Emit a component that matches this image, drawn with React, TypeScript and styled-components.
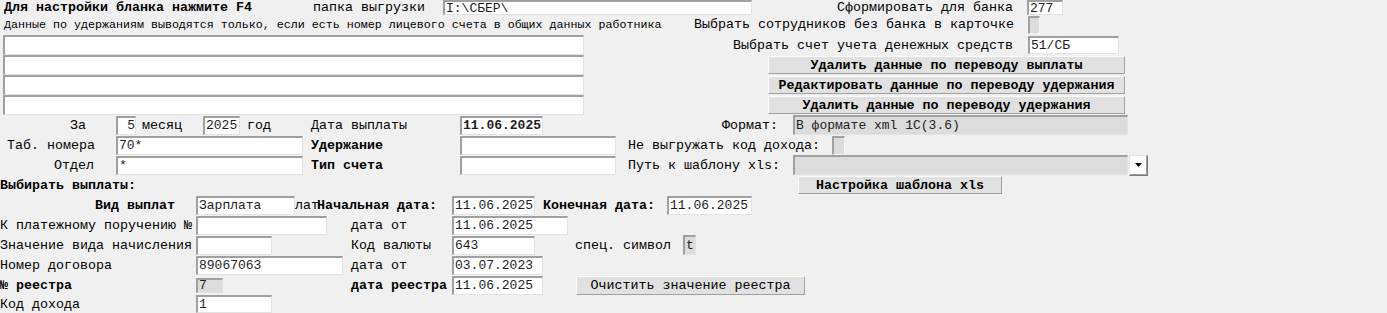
import styled, { createGlobalStyle } from 'styled-components';

const GlobalStyle = createGlobalStyle`
  body {
    margin: 0;
    background: #f0f0f0;
    font-family: "Courier New", "Nimbus Mono PS", "Nimbus Mono L", FreeMono, "Liberation Mono", monospace;
    font-size: 13.33px;
    color: #000;
  }
`;

const Form = styled.div`
  width: 1387px;
  height: 313px;
  overflow: hidden;
  display: flex;
  flex-direction: column;
`;

const Row = styled.div<{ $h: number }>`
  display: flex;
  align-items: center;
  height: ${({ $h }) => $h}px;
  flex: none;
`;

const Gap = styled.div<{ $w: number }>`
  flex: none;
  width: ${({ $w }) => $w}px;
`;

const Label = styled.div<{ $w: number; $bold?: boolean; $right?: boolean }>`
  flex: none;
  width: ${({ $w }) => $w}px;
  font-weight: ${({ $bold }) => ($bold ? 700 : 400)};
  text-align: ${({ $right }) => ($right ? 'right' : 'left')};
  white-space: nowrap;
  line-height: 15px;
`;

const Note = styled.div`
  flex: none;
  width: 690px;
  font-size: 11.67px;
  white-space: nowrap;
`;

const Field = styled.input<{ $w: number; $h?: number; $gray?: boolean; $bold?: boolean; $right?: boolean }>`
  flex: none;
  box-sizing: border-box;
  width: ${({ $w }) => $w}px;
  height: ${({ $h }) => $h ?? 19}px;
  margin: 0;
  padding: 0 0 0 1px;
  font: inherit;
  font-size: 13px;
  font-weight: ${({ $bold }) => ($bold ? 700 : 400)};
  color: #1e1e1e;
  text-align: ${({ $right }) => ($right ? 'right' : 'left')};
  background: ${({ $gray }) => ($gray ? '#dcdcdc' : '#fff')};
  border-style: solid;
  border-width: 2px 1px 1px 2px;
  border-color: #a0a0a0 #e3e3e3 #e3e3e3 #a0a0a0;
  outline: none;
`;

const Check = styled.div<{ $w: number; $h: number }>`
  flex: none;
  box-sizing: border-box;
  width: ${({ $w }) => $w}px;
  height: ${({ $h }) => $h}px;
  background: #dcdcdc;
  border-style: solid;
  border-width: 2px 1px 1px 2px;
  border-color: #a0a0a0 #f4f4f4 #f4f4f4 #a0a0a0;
`;

const Button = styled.button<{ $w: number; $h?: number; $bold?: boolean }>`
  flex: none;
  box-sizing: border-box;
  width: ${({ $w }) => $w}px;
  height: ${({ $h }) => $h ?? 18}px;
  margin: 0;
  padding: 0;
  font: inherit;
  font-weight: ${({ $bold }) => ($bold ? 700 : 400)};
  color: #000;
  background: #e1e1e1;
  border: 1px solid;
  border-color: #fdfdfd #a0a0a0 #a0a0a0 #fdfdfd;
  line-height: 15px;
  white-space: nowrap;
`;

const Upper = styled.div`
  display: flex;
  align-items: flex-start;
  height: 81px;
  flex: none;
`;

const Memo = styled.div`
  display: flex;
  flex-direction: column;
  margin-left: 3px;
  padding-top: 1px;
  width: 581px;
`;

const Side = styled.div`
  display: flex;
  flex-direction: column;
  padding-top: 2px;
`;

const ButtonStack = styled.div`
  display: flex;
  flex-direction: column;
  gap: 2px;
  margin: 2px 0 0 184px;
`;

const Combo = styled.div`
  display: flex;
  align-items: center;
  flex: none;
`;

const DropButton = styled.div`
  box-sizing: border-box;
  width: 19px;
  height: 21px;
  margin-left: 1px;
  display: flex;
  align-items: center;
  justify-content: center;
  background: #fff;
  border: 1px solid;
  border-color: #e3e3e3 #7a7a7a #7a7a7a #e3e3e3;
  box-shadow: inset -1px -1px 0 #a0a0a0;
`;

export default function App() {
  return (
    <>
      <GlobalStyle />
      <Form>
        <Row $h={15}>
          <Gap $w={4} />
          <Label $w={309} $bold>Для настройки бланка нажмите F4</Label>
          <Label $w={130}>папка выгрузки</Label>
          <Field $w={309} $h={15} readOnly value="I:\СБЕР\" />
          <Label $w={261} $right>Сформировать для банка</Label>
          <Gap $w={14} />
          <Field $w={36} $h={15} readOnly value="277" />
        </Row>

        <Row $h={19}>
          <Gap $w={4} />
          <Note>Данные по удержаниям выводятся только, если есть номер лицевого счета в общих данных работника</Note>
          <Label $w={320} $right>Выбрать сотрудников без банка в карточке</Label>
          <Gap $w={14} />
          <Check $w={12} $h={18} />
        </Row>

        <Upper>
          <Memo>
            <Field $w={581} $h={20} readOnly value="" />
            <Field $w={581} $h={20} readOnly value="" />
            <Field $w={581} $h={20} readOnly value="" />
            <Field $w={581} $h={20} readOnly value="" />
          </Memo>
          <Side>
            <Row $h={18}>
              <Label $w={429} $right>Выбрать счет учета денежных средств</Label>
              <Gap $w={15} />
              <Field $w={91} $h={18} readOnly value="51/СБ" />
            </Row>
            <ButtonStack>
              <Button $w={357} $bold>Удалить данные по переводу выплаты</Button>
              <Button $w={357} $bold>Редактировать данные по переводу удержания</Button>
              <Button $w={357} $bold>Удалить данные по переводу удержания</Button>
            </ButtonStack>
          </Side>
        </Upper>

        <Row $h={20}>
          <Gap $w={70} />
          <Label $w={46}>За</Label>
          <Field $w={20} $right readOnly value="5" />
          <Gap $w={6} />
          <Label $w={61}>месяц</Label>
          <Field $w={37} readOnly value="2025" />
          <Gap $w={7} />
          <Label $w={64}>год</Label>
          <Label $w={149}>Дата выплаты</Label>
          <Field $w={83} $bold readOnly value="11.06.2025" />
          <Label $w={235} $right>Формат:</Label>
          <Gap $w={15} />
          <Field $w={335} $h={20} $gray readOnly value="В формате xml 1С(3.6)" />
        </Row>

        <Row $h={20}>
          <Gap $w={7} />
          <Label $w={109}>Таб. номера</Label>
          <Field $w={187} readOnly value="70*" />
          <Gap $w={8} />
          <Label $w={149} $bold>Удержание</Label>
          <Field $w={156} readOnly value="" />
          <Gap $w={12} />
          <Label $w={204}>Не выгружать код дохода:</Label>
          <Check $w={13} $h={19} />
        </Row>

        <Row $h={20}>
          <Gap $w={54} />
          <Label $w={62}>Отдел</Label>
          <Field $w={187} readOnly value="*" />
          <Gap $w={8} />
          <Label $w={149} $bold>Тип счета</Label>
          <Field $w={156} readOnly value="" />
          <Gap $w={12} />
          <Label $w={165}>Путь к шаблону xls:</Label>
          <Combo>
            <Field $w={335} $h={20} $gray readOnly value="" />
            <DropButton>
              <svg width="7" height="4" viewBox="0 0 7 4">
                <path d="M0 0h7L3.5 4z" fill="#000" />
              </svg>
            </DropButton>
          </Combo>
        </Row>

        <Row $h={20}>
          <Label $w={798} $bold>Выбирать выплаты:</Label>
          <Button $w={204} $bold>Настройка шаблона xls</Button>
        </Row>

        <Row $h={20}>
          <Gap $w={95} />
          <Label $w={101} $bold>Вид выплат</Label>
          <Field $w={99} readOnly value="Зарплата" />
          <Label $w={22}>лат</Label>
          <Label $w={135} $bold>Начальная дата:</Label>
          <Field $w={83} readOnly value="11.06.2025" />
          <Gap $w={8} />
          <Label $w={124} $bold>Конечная дата:</Label>
          <Field $w={85} readOnly value="11.06.2025" />
        </Row>

        <Row $h={20}>
          <Label $w={196}>К платежному поручению №</Label>
          <Field $w={131} readOnly value="" />
          <Gap $w={24} />
          <Label $w={101}>дата от</Label>
          <Field $w={116} readOnly value="11.06.2025" />
        </Row>

        <Row $h={20}>
          <Label $w={196}>Значение вида начисления</Label>
          <Field $w={76} readOnly value="" />
          <Gap $w={79} />
          <Label $w={101}>Код валюты</Label>
          <Field $w={83} readOnly value="643" />
          <Gap $w={40} />
          <Label $w={108}>спец. символ</Label>
          <Field $w={13} $h={20} $gray readOnly value="t" />
        </Row>

        <Row $h={20}>
          <Label $w={196}>Номер договора</Label>
          <Field $w={147} readOnly value="89067063" />
          <Gap $w={8} />
          <Label $w={101}>дата от</Label>
          <Field $w={91} readOnly value="03.07.2023" />
        </Row>

        <Row $h={20}>
          <Label $w={196} $bold>№ реестра</Label>
          <Field $w={27} $h={15} $gray readOnly value="7" />
          <Gap $w={128} />
          <Label $w={101} $bold>дата реестра</Label>
          <Field $w={91} readOnly value="11.06.2025" />
          <Gap $w={33} />
          <Button $w={229} $h={19}>Очистить значение реестра</Button>
        </Row>

        <Row $h={18}>
          <Label $w={196}>Код дохода</Label>
          <Field $w={76} $h={18} readOnly value="1" />
        </Row>
      </Form>
    </>
  );
}
